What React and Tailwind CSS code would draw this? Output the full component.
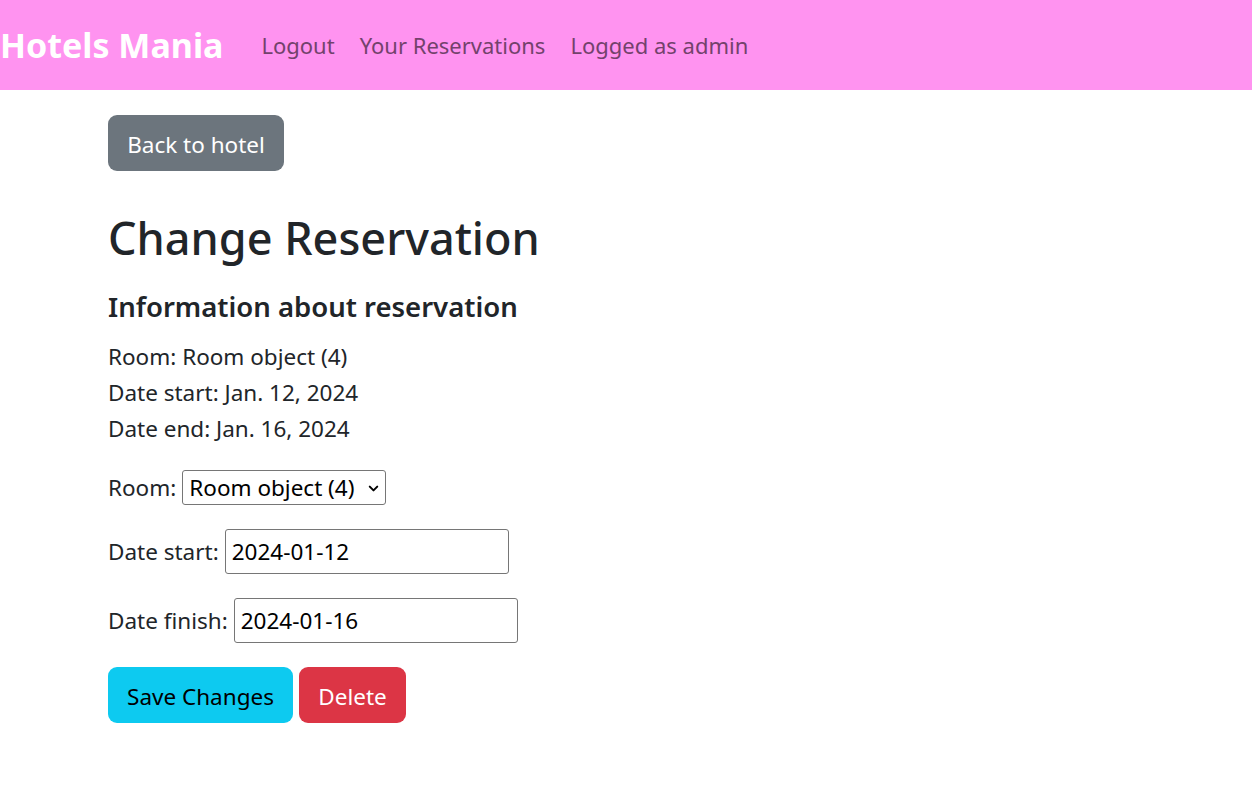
import { ChevronDown } from 'lucide-react'

function Navbar() {
  return (
    <nav className="h-[90px] bg-[#ff93f0] flex items-center">
      <a href="#" className="text-[34px] font-bold text-white mr-[38px]">Hotels Mania</a>
      <div className="flex gap-[25px] text-[22px] text-[#73426c]">
        <a href="#">Logout</a>
        <a href="#">Your Reservations</a>
        <span>Logged as admin</span>
      </div>
    </nav>
  )
}

export default function App() {
  return (
    <div className="min-h-screen bg-white text-[#212529] font-['Noto_Sans',sans-serif]">
      <Navbar />
      <main className="px-[108px] pt-[25px]">
        <button className="h-[56px] w-[176px] pt-[3px] rounded-[9px] bg-[#6c757d] text-white text-[22.5px]">
          Back to hotel
        </button>

        <h1 className="mt-[37px] text-[45px] leading-[60px] font-medium">Change Reservation</h1>
        <h5 className="mt-[21px] text-[27.5px] leading-[36px] font-semibold">Information about reservation</h5>

        <div className="mt-[14px] text-[22.5px] leading-[36px]">
          <p>Room: Room object (4)</p>
          <p>Date start: Jan. 12, 2024</p>
          <p>Date end: Jan. 16, 2024</p>
        </div>

        <form className="mt-[23px] flex flex-col items-start gap-[24px] text-[22.5px]">
          <div className="flex items-center gap-[6px]">
            <label htmlFor="room">Room:</label>
            <div className="relative h-[35px] w-[204px] border border-[#767676] rounded-[3px] flex items-center">
              <select id="room" className="appearance-none bg-transparent text-black w-full h-full pl-[6px] pr-[20px] outline-none">
                <option>Room object (4)</option>
              </select>
              <ChevronDown className="absolute right-[4px] top-[10px] w-[15px] h-[15px] text-black pointer-events-none" strokeWidth={3.2} />
            </div>
          </div>
          <div className="flex items-center gap-[6px]">
            <label htmlFor="start">Date start:</label>
            <input id="start" readOnly value="2024-01-12" className="h-[45px] w-[284px] border border-[#767676] rounded-[3px] px-[6px] text-black outline-none" />
          </div>
          <div className="flex items-center gap-[6px]">
            <label htmlFor="finish">Date finish:</label>
            <input id="finish" readOnly value="2024-01-16" className="h-[45px] w-[284px] border border-[#767676] rounded-[3px] px-[6px] text-black outline-none" />
          </div>
          <div className="flex gap-[6px]">
            <button type="button" className="h-[56px] w-[185px] pt-[3px] rounded-[9px] bg-[#0dcaf0] text-black">Save Changes</button>
            <button type="button" className="h-[56px] w-[107px] pt-[3px] rounded-[9px] bg-[#dc3545] text-white">Delete</button>
          </div>
        </form>
      </main>
    </div>
  )
}
